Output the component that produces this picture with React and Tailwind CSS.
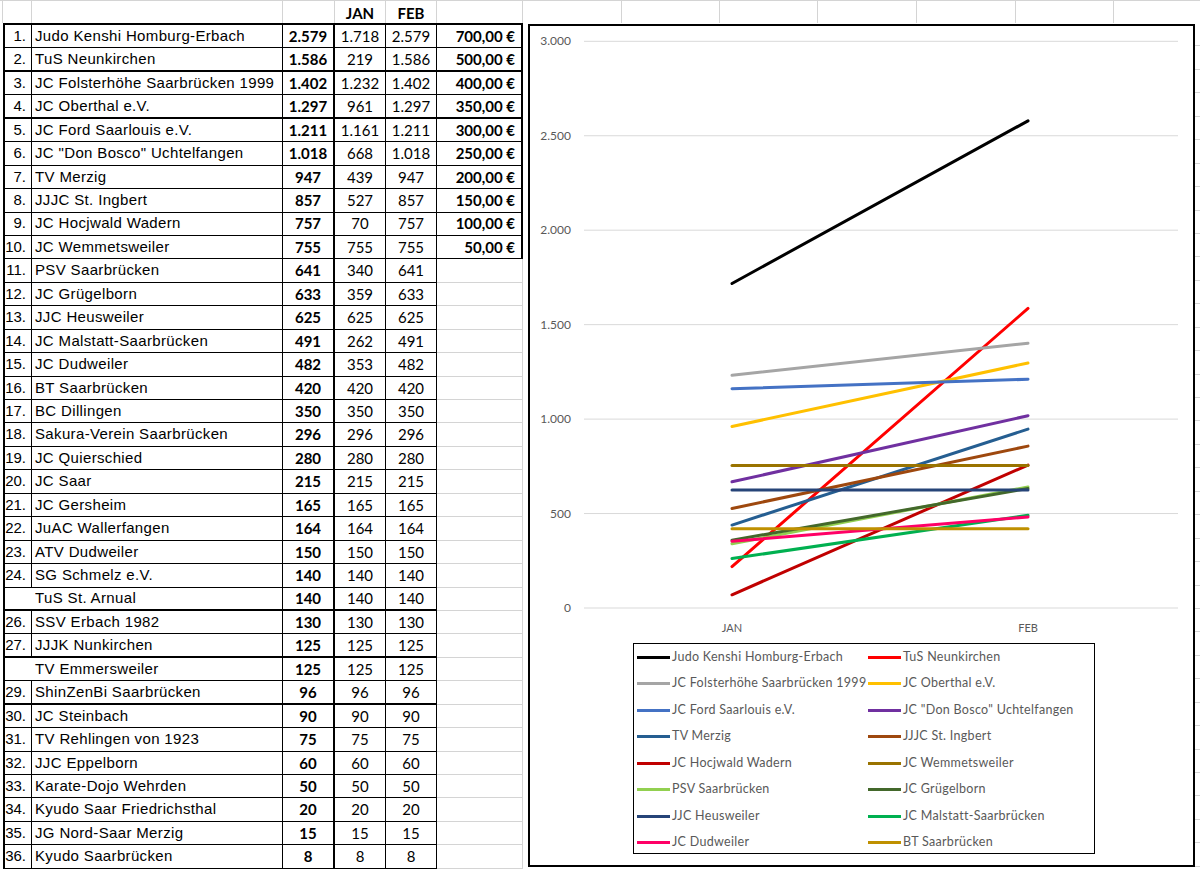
import React from 'react'

const rows = [
  { r: '1.', n: 'Judo Kenshi Homburg-Erbach', t: '2.579', j: '1.718', f: '2.579', p: '700,00 €' },
  { r: '2.', n: 'TuS Neunkirchen', t: '1.586', j: '219', f: '1.586', p: '500,00 €', thick: true },
  { r: '3.', n: 'JC Folsterhöhe Saarbrücken 1999', t: '1.402', j: '1.232', f: '1.402', p: '400,00 €' },
  { r: '4.', n: 'JC Oberthal e.V.', t: '1.297', j: '961', f: '1.297', p: '350,00 €', thick: true },
  { r: '5.', n: 'JC Ford Saarlouis e.V.', t: '1.211', j: '1.161', f: '1.211', p: '300,00 €' },
  { r: '6.', n: 'JC "Don Bosco" Uchtelfangen', t: '1.018', j: '668', f: '1.018', p: '250,00 €' },
  { r: '7.', n: 'TV Merzig', t: '947', j: '439', f: '947', p: '200,00 €' },
  { r: '8.', n: 'JJJC St. Ingbert', t: '857', j: '527', f: '857', p: '150,00 €' },
  { r: '9.', n: 'JC Hocjwald Wadern', t: '757', j: '70', f: '757', p: '100,00 €' },
  { r: '10.', n: 'JC Wemmetsweiler', t: '755', j: '755', f: '755', p: '50,00 €' },
  { r: '11.', n: 'PSV Saarbrücken', t: '641', j: '340', f: '641' },
  { r: '12.', n: 'JC Grügelborn', t: '633', j: '359', f: '633' },
  { r: '13.', n: 'JJC Heusweiler', t: '625', j: '625', f: '625' },
  { r: '14.', n: 'JC Malstatt-Saarbrücken', t: '491', j: '262', f: '491' },
  { r: '15.', n: 'JC Dudweiler', t: '482', j: '353', f: '482' },
  { r: '16.', n: 'BT Saarbrücken', t: '420', j: '420', f: '420' },
  { r: '17.', n: 'BC Dillingen', t: '350', j: '350', f: '350' },
  { r: '18.', n: 'Sakura-Verein Saarbrücken', t: '296', j: '296', f: '296' },
  { r: '19.', n: 'JC Quierschied', t: '280', j: '280', f: '280' },
  { r: '20.', n: 'JC Saar', t: '215', j: '215', f: '215' },
  { r: '21.', n: 'JC Gersheim', t: '165', j: '165', f: '165' },
  { r: '22.', n: 'JuAC Wallerfangen', t: '164', j: '164', f: '164' },
  { r: '23.', n: 'ATV Dudweiler', t: '150', j: '150', f: '150' },
  { r: '24.', n: 'SG Schmelz e.V.', t: '140', j: '140', f: '140' },
  { r: '', n: 'TuS St. Arnual', t: '140', j: '140', f: '140', thick: true },
  { r: '26.', n: 'SSV Erbach 1982', t: '130', j: '130', f: '130' },
  { r: '27.', n: 'JJJK Nunkirchen', t: '125', j: '125', f: '125', thick: true },
  { r: '', n: 'TV Emmersweiler', t: '125', j: '125', f: '125' },
  { r: '29.', n: 'ShinZenBi Saarbrücken', t: '96', j: '96', f: '96', thick: true },
  { r: '30.', n: 'JC Steinbach', t: '90', j: '90', f: '90' },
  { r: '31.', n: 'TV Rehlingen von 1923', t: '75', j: '75', f: '75' },
  { r: '32.', n: 'JJC Eppelborn', t: '60', j: '60', f: '60' },
  { r: '33.', n: 'Karate-Dojo Wehrden', t: '50', j: '50', f: '50' },
  { r: '34.', n: 'Kyudo Saar Friedrichsthal', t: '20', j: '20', f: '20' },
  { r: '35.', n: 'JG Nord-Saar Merzig', t: '15', j: '15', f: '15' },
  { r: '36.', n: 'Kyudo Saarbrücken', t: '8', j: '8', f: '8' },
]

// series for the chart (legend order)
const series = [
  { n: 'Judo Kenshi Homburg-Erbach', a: 1718, b: 2579, c: '#000000', bg: 'bg-[#000000]' },
  { n: 'TuS Neunkirchen', a: 219, b: 1586, c: '#ff0000', bg: 'bg-[#ff0000]' },
  { n: 'JC Folsterhöhe Saarbrücken 1999', a: 1232, b: 1402, c: '#a5a5a5', bg: 'bg-[#a5a5a5]' },
  { n: 'JC Oberthal e.V.', a: 961, b: 1297, c: '#ffc000', bg: 'bg-[#ffc000]' },
  { n: 'JC Ford Saarlouis e.V.', a: 1161, b: 1211, c: '#4472c4', bg: 'bg-[#4472c4]' },
  { n: 'JC "Don Bosco" Uchtelfangen', a: 668, b: 1018, c: '#7030a0', bg: 'bg-[#7030a0]' },
  { n: 'TV Merzig', a: 439, b: 947, c: '#255e91', bg: 'bg-[#255e91]' },
  { n: 'JJJC St. Ingbert', a: 527, b: 857, c: '#9e480e', bg: 'bg-[#9e480e]' },
  { n: 'JC Hocjwald Wadern', a: 70, b: 757, c: '#c00000', bg: 'bg-[#c00000]' },
  { n: 'JC Wemmetsweiler', a: 755, b: 755, c: '#997300', bg: 'bg-[#997300]' },
  { n: 'PSV Saarbrücken', a: 340, b: 641, c: '#92d050', bg: 'bg-[#92d050]' },
  { n: 'JC Grügelborn', a: 359, b: 633, c: '#43682b', bg: 'bg-[#43682b]' },
  { n: 'JJC Heusweiler', a: 625, b: 625, c: '#264478', bg: 'bg-[#264478]' },
  { n: 'JC Malstatt-Saarbrücken', a: 262, b: 491, c: '#00b050', bg: 'bg-[#00b050]' },
  { n: 'JC Dudweiler', a: 353, b: 482, c: '#ff0066', bg: 'bg-[#ff0066]' },
  { n: 'BT Saarbrücken', a: 420, b: 420, c: '#bf9000', bg: 'bg-[#bf9000]' },
]

const headerCols = [3, 29, 251, 52, 51, 51, 86, 99, 98, 98, 99, 99, 98]
const yOf = v => 608 - (v * 94.45) / 500

function TableRow({ d, i }) {
  const bb = d.thick ? 'border-b-2' : 'border-b'
  const prize = i < 10
  return (
    <div className="flex h-[23.45px]">
      <div className={`w-[29px] shrink-0 border-l-2 border-black ${bb} ${d.r ? 'border-r' : ''} flex items-center justify-end pr-[5px] text-[15px]`}>
        {d.r}
      </div>
      <div className={`w-[251px] shrink-0 border-r border-black ${bb} flex items-center pl-[3px] text-[15px] tracking-[0.35px] whitespace-nowrap`}>
        {d.n}
      </div>
      <div className={`w-[52px] shrink-0 border-r-2 border-black ${bb} flex items-center justify-center font-['Lato'] font-bold text-[15px]`}>
        {d.t}
      </div>
      <div className={`w-[51px] shrink-0 border-r border-black ${bb} flex items-center justify-center font-['Lato'] text-[15px]`}>
        {d.j}
      </div>
      <div className={`w-[51px] shrink-0 border-r border-black ${bb} flex items-center justify-center font-['Lato'] text-[15px]`}>
        {d.f}
      </div>
      {prize ? (
        <div className={`w-[86px] shrink-0 border-r-2 border-black ${bb} flex items-center justify-end pr-[6px] font-['Lato'] font-bold text-[15px]`}>
          {d.p}
        </div>
      ) : (
        <div className="w-[86px] shrink-0 border-r border-b border-[#d4d4d4]" />
      )}
    </div>
  )
}

function Chart() {
  const ticks = [0, 500, 1000, 1500, 2000, 2500, 3000]
  const fmt = v => (v >= 1000 ? `${Math.floor(v / 1000)}.${String(v % 1000).padStart(3, '0')}` : String(v))
  return (
    <div className="ml-[5px] mt-[1px] w-[667px] h-[843px] shrink-0 border-2 border-black bg-white flex flex-col">
      <svg width="663" height="617" viewBox="530 26 663 617" className="block">
        {ticks.map(v => (
          <g key={v}>
            <line x1="584" x2="1178" y1={yOf(v)} y2={yOf(v)} stroke="#d9d9d9" strokeWidth="1" />
            <text x="571" y={yOf(v) + 4} textAnchor="end" fontFamily="Lato" fontSize="12" fill="#595959">
              {fmt(v)}
            </text>
          </g>
        ))}
        {series.map(s => (
          <line key={s.n} x1="732" x2="1028" y1={yOf(s.a)} y2={yOf(s.b)} stroke={s.c} strokeWidth="3" strokeLinecap="round" />
        ))}
        <text x="732" y="632" textAnchor="middle" fontFamily="Lato" fontSize="11" fill="#595959">JAN</text>
        <text x="1028" y="632" textAnchor="middle" fontFamily="Lato" fontSize="11" fill="#595959">FEB</text>
      </svg>
      <div className="ml-[103px] w-[462px] h-[211px] border border-black grid grid-cols-[231px_1fr] auto-rows-[26.5px]">
        {series.map(s => (
          <div key={s.n} className="flex items-center pl-[3px] gap-[2px] whitespace-nowrap">
            <span className={`w-[33px] h-[3px] shrink-0 ${s.bg}`} />
            <span className="font-['Lato'] text-[12.5px] tracking-[0.3px] text-[#595959]">{s.n}</span>
          </div>
        ))}
      </div>
    </div>
  )
}

export default function App() {
  return (
    <div className="w-[1200px] h-[871px] overflow-hidden bg-white text-black font-['Liberation_Sans']">
      {/* column header strip with sheet gridlines */}
      <div className="flex h-[23px] border-t border-[#d4d4d4]">
        {headerCols.map((w, i) => (
          <div
            key={i}
            style={{ width: w }}
            className="shrink-0 border-r border-[#d4d4d4] flex items-center justify-center font-['Lato'] font-bold text-[15px] pt-[3px]"
          >
            {i === 4 ? 'JAN' : i === 5 ? 'FEB' : ''}
          </div>
        ))}
        <div className="flex-1" />
      </div>

      <div className="flex">
        <div className="ml-[3px] w-[520px] shrink-0 border-t-2 border-black">
          {rows.map((d, i) => (
            <TableRow key={i} d={d} i={i} />
          ))}
        </div>
        <Chart />
        <div className="flex-1">
          {rows.map((_, i) => (
            <div key={i} className="h-[23.45px] border-b border-[#d4d4d4]" />
          ))}
        </div>
      </div>
    </div>
  )
}
